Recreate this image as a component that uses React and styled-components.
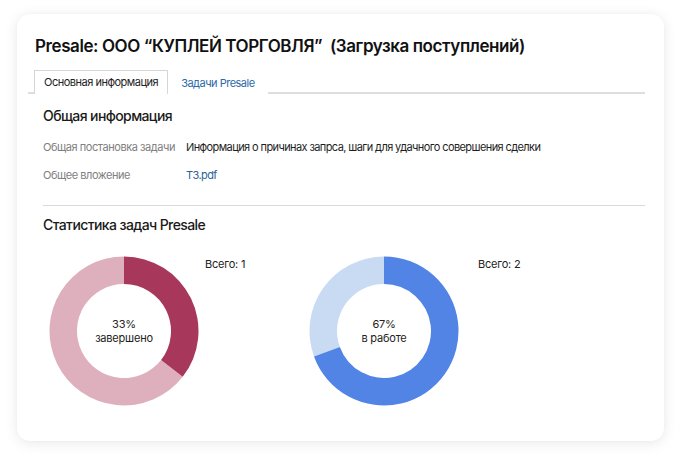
import React from "react";
import styled, { createGlobalStyle } from "styled-components";

const Global = createGlobalStyle`
  html, body { margin: 0; padding: 0; background: #ffffff; }
  body { font-family: Inter, "Noto Sans", sans-serif; color: #1a1a1a; }
  * { box-sizing: border-box; }
`;

const Page = styled.div`
  width: 683px;
  height: 463px;
  padding: 14px 19px 22px 17px;
`;

const Card = styled.div`
  width: 647px;
  height: 427px;
  background: #fff;
  border-radius: 13px;
  box-shadow: 0 2px 14px rgba(0, 0, 0, 0.09), 0 0 3px rgba(0, 0, 0, 0.03);
  padding: 22px 19px 0 11px;
  display: flex;
  flex-direction: column;
`;

const Title = styled.h1`
  margin: 0 0 0 7px;
  font-size: 17px;
  font-weight: 600;
  line-height: 20px;
  letter-spacing: -0.42px;
  color: #111;
  white-space: pre;
`;

const TabBar = styled.div`
  margin-top: 15px;
  display: flex;
  align-items: flex-end;
  padding-left: 6px;
  border-bottom: 2px solid #dedede;
  height: 23px;
`;

const Tab = styled.div`
  padding: 0 ${(p) => (p.$active ? "9px" : "12px")};
  display: flex;
  align-items: center;
  font-size: 11px;
  letter-spacing: -0.5px;
  color: ${(p) => (p.$active ? "#222" : "#2d69a8")};
  background: #fff;
  border: ${(p) => (p.$active ? "1px solid #d6d6d6" : "1px solid transparent")};
  border-bottom: none;
  margin-bottom: -2px;
  height: ${(p) => (p.$active ? "24px" : "23px")};
  padding-bottom: ${(p) => (p.$active ? "1px" : "0")};
`;

const Section = styled.section`
  padding-left: 15px;
  margin-top: 13px;
`;

const Heading = styled.h2`
  margin: 0;
  font-size: 14px;
  font-weight: 500;
  line-height: 18px;
  color: #1a1a1a;
  letter-spacing: -0.6px;
`;

const InfoList = styled.div`
  margin-top: 14px;
  display: grid;
  grid-template-columns: 143px 1fr;
  row-gap: 12px;
  font-size: 11px;
  line-height: 16px;
  letter-spacing: -0.45px;
`;

const Label = styled.div`
  color: #808080;
`;

const Value = styled.div`
  color: ${(p) => (p.$link ? "#2d5f9a" : "#1e1e1e")};
  letter-spacing: -0.6px;
`;

const Divider = styled.hr`
  margin: 22px 0 10px 0;
  border: none;
  border-top: 1px solid #d9d9d9;
`;

const Charts = styled.div`
  margin-top: 22px;
  margin-left: 6px;
  display: flex;
`;

const ChartBlock = styled.div`
  width: 260px;
  display: flex;
  align-items: flex-start;
`;

const DonutWrap = styled.div`
  position: relative;
  width: 150px;
  height: 150px;
  flex: none;
`;

const DonutLabel = styled.div`
  position: absolute;
  inset: 0;
  display: flex;
  flex-direction: column;
  align-items: center;
  justify-content: center;
  font-size: 11px;
  line-height: 14px;
  letter-spacing: -0.2px;
  color: #222;
  text-align: center;
`;

const Total = styled.div`
  margin-left: ${(p) => p.$gap}px;
  margin-top: 1px;
  font-size: 11px;
  line-height: 14px;
  letter-spacing: -0.2px;
  color: #222;
`;

function arcPath(cx, cy, r, r0, a0, a1) {
  const rad = (a) => ((a - 90) * Math.PI) / 180;
  const p = (rr, a) => [cx + rr * Math.cos(rad(a)), cy + rr * Math.sin(rad(a))];
  const large = a1 - a0 > 180 ? 1 : 0;
  const [x1, y1] = p(r, a0);
  const [x2, y2] = p(r, a1);
  const [x3, y3] = p(r0, a1);
  const [x4, y4] = p(r0, a0);
  return `M${x1} ${y1} A${r} ${r} 0 ${large} 1 ${x2} ${y2} L${x3} ${y3} A${r0} ${r0} 0 ${large} 0 ${x4} ${y4} Z`;
}

function Donut({ angle, main, rest, pct, text }) {
  return (
    <DonutWrap>
      <svg width="150" height="150" viewBox="0 0 150 150">
        <path d={arcPath(75, 75, 74.5, 47, angle, 360)} fill={rest} />
        <path d={arcPath(75, 75, 74.5, 47, 0, angle)} fill={main} />
      </svg>
      <DonutLabel>
        <span>{pct}</span>
        <span>{text}</span>
      </DonutLabel>
    </DonutWrap>
  );
}

export default function App() {
  return (
    <>
      <Global />
      <Page>
        <Card>
          <Title>{"Presale: ООО “КУПЛЕЙ ТОРГОВЛЯ”  (Загрузка поступлений)"}</Title>
          <TabBar>
            <Tab $active>Основная информация</Tab>
            <Tab>Задачи Presale</Tab>
          </TabBar>
          <Section>
            <Heading>Общая информация</Heading>
            <InfoList>
              <Label>Общая постановка задачи</Label>
              <Value>Информация о причинах запрса, шаги для удачного совершения сделки</Value>
              <Label>Общее вложение</Label>
              <Value $link>Т3.pdf</Value>
            </InfoList>
            <Divider />
            <Heading>Статистика задач Presale</Heading>
            <Charts>
              <ChartBlock>
                <Donut angle={128} main="#a8375c" rest="#deb0bd" pct="33%" text="завершено" />
                <Total $gap={6}>Всего: 1</Total>
              </ChartBlock>
              <ChartBlock>
                <Donut angle={250} main="#5184e5" rest="#c9dbf3" pct="67%" text="в работе" />
                <Total $gap={19}>Всего: 2</Total>
              </ChartBlock>
            </Charts>
          </Section>
        </Card>
      </Page>
    </>
  );
}
